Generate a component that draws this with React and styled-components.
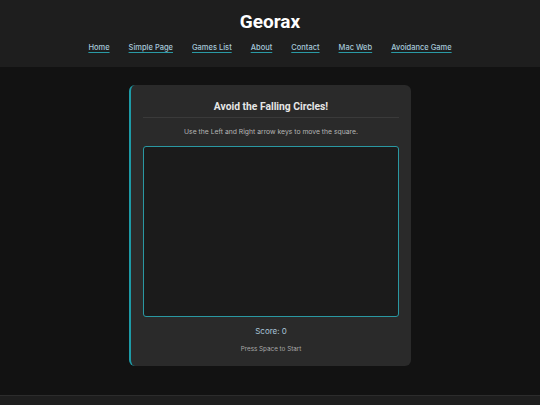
import React from "react";
import styled, { createGlobalStyle } from "styled-components";

const Global = createGlobalStyle`
  html, body { margin: 0; padding: 0; background: #121212; }
  body { font-family: Inter, "Noto Sans", sans-serif; color: #e0e0e0; }
  * { box-sizing: border-box; }
`;

const Page = styled.div`
  min-height: 405px;
  display: flex;
  flex-direction: column;
`;

const Header = styled.header`
  background: #1e1e1e;
  height: 67px;
  display: flex;
  flex-direction: column;
  align-items: center;
  padding-top: 10px;
`;

const Title = styled.h1`
  margin: 0;
  font-family: Roboto, sans-serif;
  font-size: 19px;
  font-weight: 700;
  color: #ffffff;
  line-height: 23px;
`;

const Nav = styled.nav`
  display: flex;
  gap: 19px;
  margin-top: 10px;
`;

const NavLink = styled.a`
  font-size: 7.5px;
  font-weight: 500;
  color: #a6c8da;
  text-decoration: underline;
  text-decoration-color: #2a9aa5;
  text-underline-offset: 2px;
  text-decoration-thickness: 1px;
`;

const Main = styled.main`
  flex: 1;
  display: flex;
  justify-content: center;
  padding-top: 18px;
`;

const Card = styled.section`
  width: 282px;
  height: 281px;
  background: #2a2a2a;
  border-radius: 6px;
  border-left: 2px solid #1e9aa6;
  padding: 15px 12px 0 12px;
  display: flex;
  flex-direction: column;
  align-items: stretch;
`;

const CardTitle = styled.h2`
  margin: 0;
  text-align: center;
  font-family: Roboto, sans-serif;
  font-size: 10.3px;
  font-weight: 700;
  color: #e6e6e6;
  line-height: 14px;
  padding-bottom: 3px;
  border-bottom: 1px solid #3a3a3a;
`;

const Instruction = styled.p`
  margin: 9px 0 0;
  text-align: center;
  font-size: 6.8px;
  color: #b5b5b5;
  line-height: 10px;
`;

const GameArea = styled.div`
  margin-top: 9px;
  height: 171px;
  background: #1b1b1b;
  border: 1.5px solid #2a98a2;
  border-radius: 3px;
`;

const Score = styled.div`
  margin-top: 8px;
  text-align: center;
  font-size: 8px;
  color: #a9c4d8;
  line-height: 12px;
`;

const Hint = styled.div`
  margin-top: 7px;
  text-align: center;
  font-size: 6.3px;
  color: #a8a8a8;
  line-height: 10px;
`;

const Footer = styled.footer`
  margin-top: auto;
  height: 10px;
  background: #1e1e1e;
  border-top: 1px solid #2c2c2c;
`;

const links = ["Home", "Simple Page", "Games List", "About", "Contact", "Mac Web", "Avoidance Game"];

export default function App() {
  return (
    <Page>
      <Global />
      <Header>
        <Title>Georax</Title>
        <Nav>
          {links.map((l) => (
            <NavLink key={l} href="#">{l}</NavLink>
          ))}
        </Nav>
      </Header>
      <Main>
        <Card>
          <CardTitle>Avoid the Falling Circles!</CardTitle>
          <Instruction>Use the Left and Right arrow keys to move the square.</Instruction>
          <GameArea />
          <Score>Score: 0</Score>
          <Hint>Press Space to Start</Hint>
        </Card>
      </Main>
      <Footer />
    </Page>
  );
}
